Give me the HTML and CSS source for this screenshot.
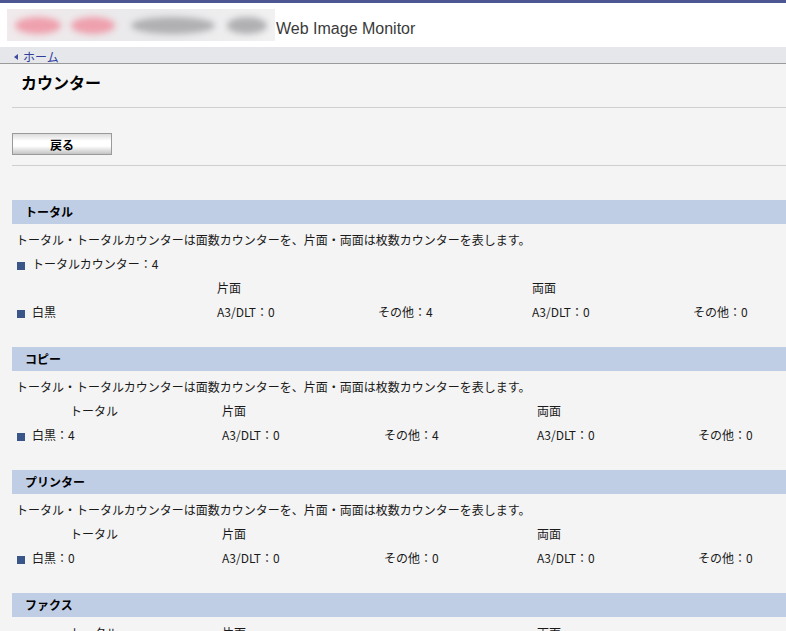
FILE: index.html
```html
<!DOCTYPE html>
<html lang="ja">

<head>
  <meta charset="utf-8">
  <title>Web Image Monitor - カウンター</title>
  <link rel="stylesheet" href="styles.css">
</head>

<body>

  <div class="topbar"></div>

  <header class="header">
    <div class="logo">
      <span class="blob blob-pink blob-1"></span>
      <span class="blob blob-pink blob-2"></span>
      <span class="blob blob-grey blob-3"></span>
      <span class="blob blob-grey blob-4"></span>
    </div>
    <span class="product">Web Image Monitor</span>
  </header>

  <nav class="crumb">
    <a href="#" class="crumb-link"><span class="crumb-arrow"></span>ホーム</a>
  </nav>

  <main class="main">

    <h1 class="page-title">カウンター</h1>
    <hr class="rule">

    <div class="actions">
      <button class="btn">戻る</button>
    </div>
    <hr class="rule">

    <!-- total -->
    <section class="section section-first">
      <h2 class="section-bar">トータル</h2>
      <div class="section-body">
        <p class="line">トータル・トータルカウンターは面数カウンターを、片面・両面は枚数カウンターを表します。</p>
        <p class="line"><span class="bullet"></span>トータルカウンター：4</p>
        <div class="grid grid-total">
          <span></span>
          <span>片面</span>
          <span></span>
          <span>両面</span>
          <span></span>

          <span><span class="bullet"></span>白黒</span>
          <span>A3/DLT：0</span>
          <span>その他：4</span>
          <span>A3/DLT：0</span>
          <span>その他：0</span>
        </div>
      </div>
    </section>

    <!-- copy -->
    <section class="section">
      <h2 class="section-bar">コピー</h2>
      <div class="section-body">
        <p class="line">トータル・トータルカウンターは面数カウンターを、片面・両面は枚数カウンターを表します。</p>
        <div class="grid grid-func">
          <span class="col-total">トータル</span>
          <span>片面</span>
          <span></span>
          <span>両面</span>
          <span></span>

          <span><span class="bullet"></span>白黒：4</span>
          <span>A3/DLT：0</span>
          <span>その他：4</span>
          <span>A3/DLT：0</span>
          <span>その他：0</span>
        </div>
      </div>
    </section>

    <!-- printer -->
    <section class="section">
      <h2 class="section-bar">プリンター</h2>
      <div class="section-body">
        <p class="line">トータル・トータルカウンターは面数カウンターを、片面・両面は枚数カウンターを表します。</p>
        <div class="grid grid-func">
          <span class="col-total">トータル</span>
          <span>片面</span>
          <span></span>
          <span>両面</span>
          <span></span>

          <span><span class="bullet"></span>白黒：0</span>
          <span>A3/DLT：0</span>
          <span>その他：0</span>
          <span>A3/DLT：0</span>
          <span>その他：0</span>
        </div>
      </div>
    </section>

    <!-- fax -->
    <section class="section">
      <h2 class="section-bar">ファクス</h2>
      <div class="section-body">
        <div class="grid grid-func">
          <span class="col-total">トータル</span>
          <span>片面</span>
          <span></span>
          <span>両面</span>
          <span></span>

          <span><span class="bullet"></span>白黒：0</span>
          <span>A3/DLT：0</span>
          <span>その他：0</span>
          <span>A3/DLT：0</span>
          <span>その他：0</span>
        </div>
      </div>
    </section>

  </main>

</body>

</html>
```

FILE: styles.css
```css
/* ******************** global ******************* */

* {
  box-sizing: border-box;
}

html,
body {
  margin: 0;
  padding: 0;
}

body {
  background-color: #f4f4f4;
  color: #1a1a1a;
  font-family: "Noto Sans CJK JP", "Noto Sans", sans-serif;
  font-size: 12px;
  overflow: hidden;
}

/* ******************** header ******************* */

.topbar {
  height: 3px;
  background-color: #4b5692;
}

.header {
  display: flex;
  align-items: center;
  height: 44px;
  padding-left: 7px;
  background-color: white;
}

.logo {
  position: relative;
  width: 268px;
  height: 32px;
  overflow: hidden;
  background: linear-gradient(90deg, #f0eaec, #e9e9eb 55%, #f1f1f2);
}

.blob {
  position: absolute;
  top: 8px;
  height: 17px;
  border-radius: 50%;
  filter: blur(3px);
}

.blob-pink {
  background-color: #eea0ad;
}

.blob-grey {
  background-color: #b0b0b3;
}

.blob-1 { left: 8px; width: 46px; }
.blob-2 { left: 64px; width: 44px; }
.blob-3 { left: 124px; width: 84px; }
.blob-4 { left: 220px; width: 40px; }

.product {
  margin-left: 1px;
  padding-top: 7px;
  font-family: "Liberation Sans", Arial, sans-serif;
  font-size: 16px;
  color: #3a3a3a;
}

/* ******************** breadcrumb ******************* */

.crumb {
  height: 17px;
  padding-left: 14px;
  background-color: #e6e7eb;
  border-bottom: 1px solid #9a9a9a;
  line-height: 16px;
}

.crumb-link {
  display: inline-flex;
  align-items: center;
  color: #2f3d9c;
  text-decoration: none;
}

.crumb-arrow {
  width: 0;
  height: 0;
  margin-right: 5px;
  border-top: 3px solid transparent;
  border-bottom: 3px solid transparent;
  border-right: 4px solid #3d4c9e;
}

/* ******************** main ******************* */

.main {
  padding-left: 12px;
}

.page-title {
  margin: 0;
  padding: 8px 0 15px 9px;
  font-size: 16px;
  line-height: 20px;
  font-weight: bold;
  color: black;
}

.rule {
  margin: 0;
  height: 1px;
  border: none;
  background-color: #cfcfcf;
}

.actions {
  padding: 25px 0 10px 0;
}

.btn {
  display: block;
  width: 100px;
  height: 22px;
  margin: 0;
  padding: 0;
  border: 1px solid #9a9a9a;
  background: linear-gradient(#dcdcdc, #ffffff 35%, #ffffff 60%, #c4c4c4);
  font-family: inherit;
  font-size: 12px;
  font-weight: bold;
  color: black;
}

/* ******************** sections ******************* */

.section {
  margin-bottom: 23px;
}

.section-first {
  margin-top: 34px;
}

.section-bar {
  margin: 0;
  height: 24px;
  padding-left: 13px;
  background-color: #bfcee5;
  font-size: 12px;
  font-weight: bold;
  line-height: 24px;
  color: black;
}

.section-body {
  padding: 4px 0 0 4px;
}

.line {
  margin: 0;
  line-height: 24px;
  white-space: nowrap;
}

.bullet {
  display: inline-block;
  width: 8px;
  height: 8px;
  margin: 0 7px 0 1px;
  background-color: #3a5688;
  vertical-align: -0.5px;
}

.grid {
  display: grid;
  line-height: 24px;
  white-space: nowrap;
}

.grid-total {
  grid-template-columns: 201px 161px 154px 161px 1fr;
}

.grid-func {
  grid-template-columns: 206px 162px 153px 161px 1fr;
}

.col-total {
  padding-left: 54px;
}
```
